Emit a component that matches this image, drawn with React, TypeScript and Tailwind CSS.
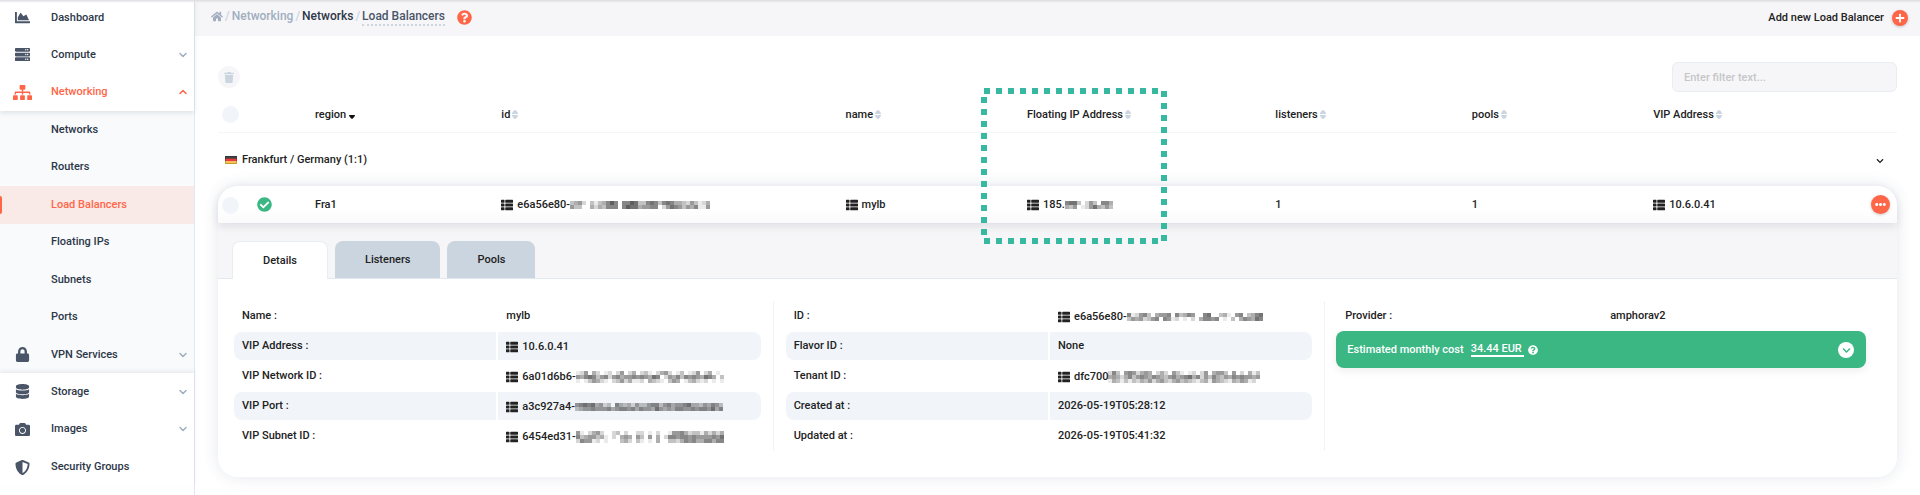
import React from "react";
import {
  FaCamera,
  FaChartArea,
  FaCheckCircle,
  FaChevronDown,
  FaDatabase,
  FaEllipsisH,
  FaHome,
  FaLock,
  FaPlus,
  FaQuestionCircle,
  FaServer,
  FaShieldAlt,
  FaSitemap,
  FaThList,
  FaTrash,
} from "react-icons/fa";
import { FiChevronDown, FiChevronUp } from "react-icons/fi";

/* Redacted part of an identifier: one digit per cell, 0 is clear and 9 is darkest. */
function Mosaic({ rows }: { rows: string[] }) {
  const w = rows[0].length * 4;
  const h = rows.length * 4;
  return (
    <svg width={w} height={h} viewBox={`0 0 ${w} ${h}`} shapeRendering="crispEdges" aria-hidden="true" className="shrink-0">
      {rows.map((row, y) =>
        row.split("").map((d, x) =>
          d === "0" ? null : (
            <rect key={`${y}-${x}`} x={x * 4} y={y * 4} width="4" height="4" fill="#222" fillOpacity={Number(d) / 11} />
          )
        )
      )}
    </svg>
  );
}

const M = {
  id: ["34520313468606687336763676443253124", "53300424366606877455660257653546115"],
  ip: ["677302530664", "435012574353"],
  network: [
    "1250420120250240231024520130125024010",
    "5467635625645565654760254636565476403",
    "1013542102352411204321035401342120101",
  ],
  port: ["5676745230643425335663564556744354653", "3455655564566564655475454665565665746"],
  subnet: [
    "5102452002302002201020015564233142424",
    "6345534102045405305040266566565555657",
    "2655120100034203101040033246564466466",
  ],
  uuid: ["6125630455606346500670034105603467", "3545235606512010204665601030465476"],
  tenant: [
    "26305652454024205310120250455305020413",
    "45424635654654356456746253643546565545",
    "14313132435245324534321341543214354120",
  ],
};

function Value({ text, mosaic }: { text: string; mosaic?: string[] }) {
  return (
    <span className="flex items-center pt-px">
      <FaThList className="mr-1 h-3 w-3 shrink-0" />
      {text}
      {mosaic && <Mosaic rows={mosaic} />}
    </span>
  );
}

function SortMark() {
  return (
    <svg width="6" height="9" viewBox="0 0 6 9" aria-hidden="true">
      <path d="M0 4C0 2.2 1.6.4 3 0C4.4.4 6 2.2 6 4Z" fill="#cbd5e0" />
      <path d="M0 5C0 6.8 1.6 8.6 3 9C4.4 8.6 6 6.8 6 5Z" fill="#cbd5e0" />
    </svg>
  );
}

type ItemProps = { icon: React.ReactNode; label: string; chevron?: "up" | "down"; active?: boolean };

function NavItem({ icon, label, chevron, active }: ItemProps) {
  return (
    <a href="#" className={`flex min-h-[37px] items-center pr-[5px] ${active ? "text-[#ff6647]" : "text-[#2d3748]"}`}>
      <span className={`flex w-[45px] justify-center ${active ? "text-[#ff6647]" : "text-[#4a5568]"}`}>{icon}</span>
      <span className="ml-[6px] flex-1">{label}</span>
      {chevron === "down" && <FiChevronDown strokeWidth={3} className="h-3 w-3 text-[#a0aec0]" />}
      {chevron === "up" && <FiChevronUp strokeWidth={3} className="h-3 w-3" />}
    </a>
  );
}

function SubItem({ label, active }: { label: string; active?: boolean }) {
  return (
    <a
      href="#"
      className={`relative flex min-h-[37px] items-center pl-[51px] ${active ? "bg-[#f9e9e7] text-[#ff6647]" : ""}`}
    >
      {active && <span className="absolute top-[10px] left-0 h-[18px] w-[2px] rounded-r-sm bg-[#ff6647]" />}
      {label}
    </a>
  );
}

function Sidebar() {
  return (
    <nav className="w-[195px] shrink-0 border-r border-[#e2e8f0] bg-white">
      <div className="relative -mt-px grid h-[112px] auto-rows-fr shadow-[0_2px_5px_rgba(45,55,72,0.12)]">
        <NavItem icon={<FaChartArea className="h-[15px] w-[15px]" />} label="Dashboard" />
        <NavItem icon={<FaServer className="h-[15px] w-[15px]" />} label="Compute" chevron="down" />
        <NavItem icon={<FaSitemap className="h-[17px] w-[19px]" />} label="Networking" chevron="up" active />
      </div>
      <div className="bg-[#f8fafc] text-[#2d3748]">
        <div className="grid h-[225px] auto-rows-fr">
          <SubItem label="Networks" />
          <SubItem label="Routers" />
          <SubItem label="Load Balancers" active />
          <SubItem label="Floating IPs" />
          <SubItem label="Subnets" />
          <SubItem label="Ports" />
        </div>
        <NavItem icon={<FaLock className="h-[15px] w-[15px]" />} label="VPN Services" chevron="down" />
      </div>
      <div className="relative grid h-[113px] auto-rows-fr bg-white shadow-[0_-2px_4px_rgba(45,55,72,0.08)]">
        <NavItem icon={<FaDatabase className="h-[15px] w-[15px]" />} label="Storage" chevron="down" />
        <NavItem icon={<FaCamera className="h-[15px] w-[15px]" />} label="Images" chevron="down" />
        <NavItem icon={<FaShieldAlt className="h-[15px] w-[15px]" />} label="Security Groups" />
      </div>
    </nav>
  );
}

function TopBar() {
  return (
    <header className="flex h-9 items-center bg-[#f6f6f8] pr-[12px] pl-[16px]">
      <nav className="flex flex-1 items-center gap-[2px] pb-1 text-[12px] text-[#a0aec0]" aria-label="Breadcrumb">
        <a href="#" aria-label="Home">
          <FaHome className="h-[11px] w-[12px]" />
        </a>
        <span className="text-[#cbd5e0]">/</span>
        <a href="#">Networking</a>
        <span className="text-[#cbd5e0]">/</span>
        <a href="#" className="text-[#2d3748]">Networks</a>
        <span className="text-[#cbd5e0]">/</span>
        <a href="#" className="-mb-[2px] border-b-2 border-dotted border-[#cbd5e0] text-[#4a5568]">Load Balancers</a>
        <button type="button" aria-label="Help" className="ml-[10px] pt-[2px] text-[#ff6647]">
          <FaQuestionCircle className="h-[15px] w-[15px]" />
        </button>
      </nav>
      <button type="button" className="flex items-center gap-2">
        Add new Load Balancer
        <span className="flex h-4 w-4 items-center justify-center rounded-full bg-[#ff6647] text-white shadow-[0_1px_3px_rgba(0,0,0,0.2)]">
          <FaPlus className="h-[10px] w-[10px]" />
        </span>
      </button>
    </header>
  );
}

/* Dotted frame that marks out the floating IP column. */
function Highlight() {
  const squares: [number, number][] = [];
  for (let i = 0; i < 15; i++) squares.push([3 + i * 12, 0], [3 + i * 12, 150]);
  for (let i = 0; i < 12; i++) squares.push([0, 9 + i * 12]);
  for (let i = 0; i < 13; i++) squares.push([180, 3 + i * 12]);
  return (
    <svg
      width="186"
      height="156"
      viewBox="0 0 186 156"
      shapeRendering="crispEdges"
      aria-hidden="true"
      className="pointer-events-none absolute -top-[9px] -left-[46px] z-20 max-w-none"
    >
      {squares.map(([x, y]) => (
        <rect key={`${x}-${y}`} x={x} y={y} width="6" height="6" fill="#36b9a0" />
      ))}
    </svg>
  );
}

function Head({ label, highlighted }: { label: string; highlighted?: boolean }) {
  return (
    <th scope="col" className="relative border-b border-[#f4f5f7] p-0 text-left font-medium">
      {highlighted && <Highlight />}
      <button type="button" className={`flex items-center ${label === "region" ? "gap-[3px]" : "gap-[2px]"}`}>
        {label}
        {label === "region" ? (
          <svg width="6" height="4" viewBox="0 0 6 4" aria-hidden="true" className="mt-1">
            <path d="M0 0H6C6 1.6 4.2 3.4 3 4C1.8 3.4 0 1.6 0 0Z" fill="#111" />
          </svg>
        ) : (
          <SortMark />
        )}
      </button>
    </th>
  );
}

function DetailTable({ rows }: { rows: [string, React.ReactNode][] }) {
  return (
    <table className="w-full table-fixed border-separate border-spacing-x-[2px] border-spacing-y-0">
      <tbody>
        {rows.map(([label, value], i) => (
          <tr key={label} className="h-[30px]">
            <th scope="row" className="px-0 py-px text-left font-medium">
              <div className={`flex h-7 items-center rounded-l-lg pl-2 ${i % 2 ? "bg-[#f1f5f9]" : ""}`}>{label} :</div>
            </th>
            <td className="px-0 py-px">
              <div className={`flex h-7 items-center rounded-r-lg pl-2 ${i % 2 ? "bg-[#f1f5f9]" : ""}`}>{value}</div>
            </td>
          </tr>
        ))}
      </tbody>
    </table>
  );
}

function Details() {
  return (
    <div className="grid grid-cols-3 divide-x divide-[#f1f3f6] pt-[22px] pr-[20px] pb-[26px] pl-[4px]">
      <div className="px-[10px]">
        <DetailTable
          rows={[
            ["Name", "mylb"],
            ["VIP Address", <Value text="10.6.0.41" />],
            ["VIP Network ID", <Value text="6a01d6b6-" mosaic={M.network} />],
            ["VIP Port", <Value text="a3c927a4-" mosaic={M.port} />],
            ["VIP Subnet ID", <Value text="6454ed31-" mosaic={M.subnet} />],
          ]}
        />
      </div>
      <div className="px-[10px]">
        <DetailTable
          rows={[
            ["ID", <Value text="e6a56e80-" mosaic={M.uuid} />],
            ["Flavor ID", "None"],
            ["Tenant ID", <Value text="dfc700" mosaic={M.tenant} />],
            ["Created at", "2026-05-19T05:28:12"],
            ["Updated at", "2026-05-19T05:41:32"],
          ]}
        />
      </div>
      <div className="px-[10px]">
        <DetailTable rows={[["Provider", "amphorav2"]]} />
        <div className="mr-px ml-px flex h-[37px] items-center rounded-lg bg-[#3bb784] pr-[12px] pl-[11px] text-white shadow-[0_3px_8px_rgba(0,0,0,0.07)]">
          <span>Estimated monthly cost</span>
          <span className="mr-[4px] ml-[7px] border-b-2 border-white pr-[2px] leading-3">34.44 EUR</span>
          <FaQuestionCircle className="h-[10px] w-[10px]" />
          <button
            type="button"
            aria-label="Show cost details"
            className="ml-auto flex h-4 w-4 items-center justify-center rounded-full bg-white text-[#3bb784]"
          >
            <FaChevronDown className="mt-px h-[9px] w-[9px]" />
          </button>
        </div>
      </div>
    </div>
  );
}

const check = "block h-[17px] w-[17px] appearance-none rounded-full bg-[#f1f5fa]";
const cell = "border-0 bg-gradient-to-b from-white from-60% to-[#fafafb] p-0";

function LoadBalancers() {
  return (
    <main className="px-[23px] pt-[26px] pb-[18px]">
      <div className="flex items-center justify-between">
        <button
          type="button"
          aria-label="Delete selected"
          className="flex h-[22px] w-[22px] items-center justify-center rounded-full bg-[#f6f6f8] text-[#cbd5e0]"
        >
          <FaTrash className="h-[11px] w-[10px]" />
        </button>
        <input
          type="text"
          aria-label="Filter"
          placeholder="Enter filter text..."
          className="h-[30px] w-[225px] rounded-md border border-[#e8ecf3] bg-[#f6f6f8] px-[11px] placeholder:text-[#c6c6c8]"
        />
      </div>
      <table className="mt-[5px] w-full table-fixed border-separate border-spacing-0">
        <colgroup>
          <col className="w-[39px]" />
          <col className="w-[58px]" />
          <col className="w-[11.1%]" />
          <col className="w-[20.5%]" />
          <col className="w-[10.8%]" />
          <col className="w-[14.8%]" />
          <col className="w-[11.7%]" />
          <col className="w-[10.8%]" />
          <col />
          <col className="w-[26px]" />
        </colgroup>
        <thead>
          <tr className="h-9">
            <th className="border-b border-[#f4f5f7] p-0 pl-1">
              <input type="checkbox" aria-label="Select all" className={check} />
            </th>
            <th className="border-b border-[#f4f5f7] p-0" />
            <Head label="region" />
            <Head label="id" />
            <Head label="name" />
            <Head label="Floating IP Address" highlighted />
            <Head label="listeners" />
            <Head label="pools" />
            <Head label="VIP Address" />
            <th className="border-b border-[#f4f5f7] p-0" />
          </tr>
        </thead>
        <tbody>
          <tr className="h-[53px]">
            <td colSpan={9} className="p-0 pl-[7px]">
              <span className="flex items-center gap-[5px]">
                <svg width="12" height="8" viewBox="0 0 12 8" aria-hidden="true">
                  <rect width="12" height="3" fill="#444" />
                  <rect y="2.7" width="12" height="2.7" fill="#ea3a3a" />
                  <rect y="5.4" width="12" height="2.6" fill="#f6c644" />
                  <rect x=".5" y=".5" width="11" height="7" fill="none" stroke="#000" strokeOpacity=".2" />
                </svg>
                Frankfurt / Germany (1:1)
              </span>
            </td>
            <td className="p-0">
              <button type="button" aria-label="Collapse group" className="ml-[5px] block pt-[3px]">
                <FaChevronDown className="h-2 w-2" />
              </button>
            </td>
          </tr>
        </tbody>
        <tbody className="rounded-[20px] shadow-[0_0_16px_rgba(45,55,100,0.12)]">
          <tr className="relative h-[37px] rounded-t-[20px] shadow-[0_3px_9px_rgba(45,45,80,0.12)]">
            <td className={`rounded-tl-[20px] ${cell}`}>
              <input type="checkbox" aria-label="Select mylb" className={`${check} mt-[2px] ml-1`} />
            </td>
            <td className={cell}>
              <FaCheckCircle className="h-[15px] w-[15px] text-[#3bb784]" />
            </td>
            <td className={cell}>Fra1</td>
            <td className={cell}><Value text="e6a56e80-" mosaic={M.id} /></td>
            <td className={cell}><Value text="mylb" /></td>
            <td className={cell}><Value text="185." mosaic={M.ip} /></td>
            <td className={cell}>1</td>
            <td className={cell}>1</td>
            <td className={cell}><Value text="10.6.0.41" /></td>
            <td className={`rounded-tr-[20px] ${cell}`}>
              <button
                type="button"
                aria-label="Actions"
                className="flex h-[19px] w-[19px] items-center justify-center rounded-full bg-[#ff6647] text-white shadow-[0_1px_3px_rgba(0,0,0,0.2)]"
              >
                <FaEllipsisH className="h-[11px] w-[11px]" />
              </button>
            </td>
          </tr>
          <tr>
            <td colSpan={10} className="rounded-b-[20px] bg-white p-0">
              <div className="flex gap-[7px] border-b border-[#e2e8f0] bg-[#f6f6f8] px-[14px] pt-[18px]" role="tablist">
                <button type="button" role="tab" aria-selected="true" className="-mb-px h-[38px] rounded-t-lg border border-b-0 border-[#e8edf4] bg-white px-[30px]">
                  Details
                </button>
                <button type="button" role="tab" aria-selected="false" className="h-[37px] rounded-t-lg bg-[#cbd5e0] px-[30px]">
                  Listeners
                </button>
                <button type="button" role="tab" aria-selected="false" className="h-[37px] rounded-t-lg bg-[#cbd5e0] px-[30px]">
                  Pools
                </button>
              </div>
              <Details />
            </td>
          </tr>
        </tbody>
      </table>
    </main>
  );
}

export default function App() {
  return (
    <div className="relative flex min-h-screen bg-white font-['Roboto',sans-serif] text-[11px] leading-4 font-medium text-[#222]">
      <div className="pointer-events-none absolute inset-x-0 top-0 z-10 h-[3px] bg-gradient-to-b from-[#dcdce2] to-transparent" />
      <Sidebar />
      <div className="min-w-0 flex-1">
        <TopBar />
        <LoadBalancers />
      </div>
    </div>
  );
}
